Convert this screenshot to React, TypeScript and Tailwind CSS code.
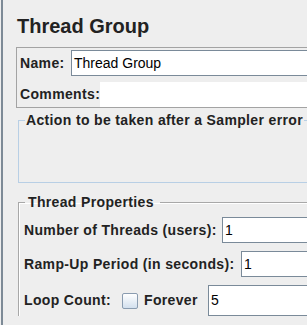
import * as React from 'react';

const TextBox: React.FC<{ value?: string; className?: string }> = ({ value = "", className = "" }) => {
    return (
        <div className={"flex items-center bg-white border border-[#7a8a99] pl-[2px] text-[14px] text-black " + className}>
            {value}
        </div>
    );
};

const App: React.FC = () => {
    return (
        <div className="w-[307px] h-[325px] overflow-hidden bg-[#eeeeee] pl-px font-['Liberation_Sans',Arial,sans-serif] text-[#222]">
            <div className="h-full border-l-2 border-[#7d8a96] pl-[13px]">
                <h1 className="pt-[14px] ml-px text-[20px] font-bold leading-[24px]">Thread Group</h1>

                {/* name + comments */}
                <div className="mt-[9px] w-[420px] border border-[#a3a3a3] pt-[2px]">
                    <div className="flex items-center pl-[3px]">
                        <span className="w-[51px] text-[14px] font-bold tracking-[0.35px]">Name:</span>
                        <TextBox value="Thread Group" className="flex-1 h-[26px]" />
                    </div>
                    <div className="flex items-center pl-[3px] mt-[6px]">
                        <span className="w-[80px] text-[14px] font-bold tracking-[0.35px]">Comments:</span>
                        <div className="flex-1 h-[25px] bg-white" />
                    </div>
                </div>

                {/* sampler error action */}
                <fieldset className="mt-[4px] ml-[2px] w-[420px] border border-[#b8cfe5]">
                    <legend className="ml-[6px] px-px text-[14px] font-bold leading-[16px] tracking-[0.35px]">
                        Action to be taken after a Sampler error
                    </legend>
                    <div className="h-[54px]" />
                </fieldset>

                {/* thread properties */}
                <fieldset className="mt-[11px] ml-[2px] w-[420px] border-t border-l border-[#a8a8a8] shadow-[inset_1px_1px_0_#ffffff]">
                    <legend className="ml-[6px] px-[3px] pr-[6px] text-[14px] font-bold leading-[16px] tracking-[0.35px]">
                        Thread Properties
                    </legend>
                    <div className="flex flex-col gap-[8px] pl-[5px] pt-[7px] tracking-[0.35px]">
                        <div className="flex items-center">
                            <span className="w-[198px] text-[14px] font-bold">Number of Threads (users):</span>
                            <TextBox value="1" className="flex-1 h-[26px] tracking-normal" />
                        </div>
                        <div className="flex items-center">
                            <span className="w-[217px] text-[14px] font-bold">Ramp-Up Period (in seconds):</span>
                            <TextBox value="1" className="flex-1 h-[26px] tracking-normal" />
                        </div>
                        <div className="flex items-center">
                            <span className="w-[98px] text-[14px] font-bold">Loop Count:</span>
                            <span className="w-[16px] h-[16px] rounded-[2px] border border-[#8a9cb0] bg-gradient-to-b from-[#ffffff] to-[#d3e0ee]" />
                            <span className="ml-[6px] w-[64px] text-[14px] font-bold">Forever</span>
                            <TextBox value="5" className="flex-1 h-[31px] tracking-normal" />
                        </div>
                    </div>
                </fieldset>
            </div>
        </div>
    );
};

export default App;
